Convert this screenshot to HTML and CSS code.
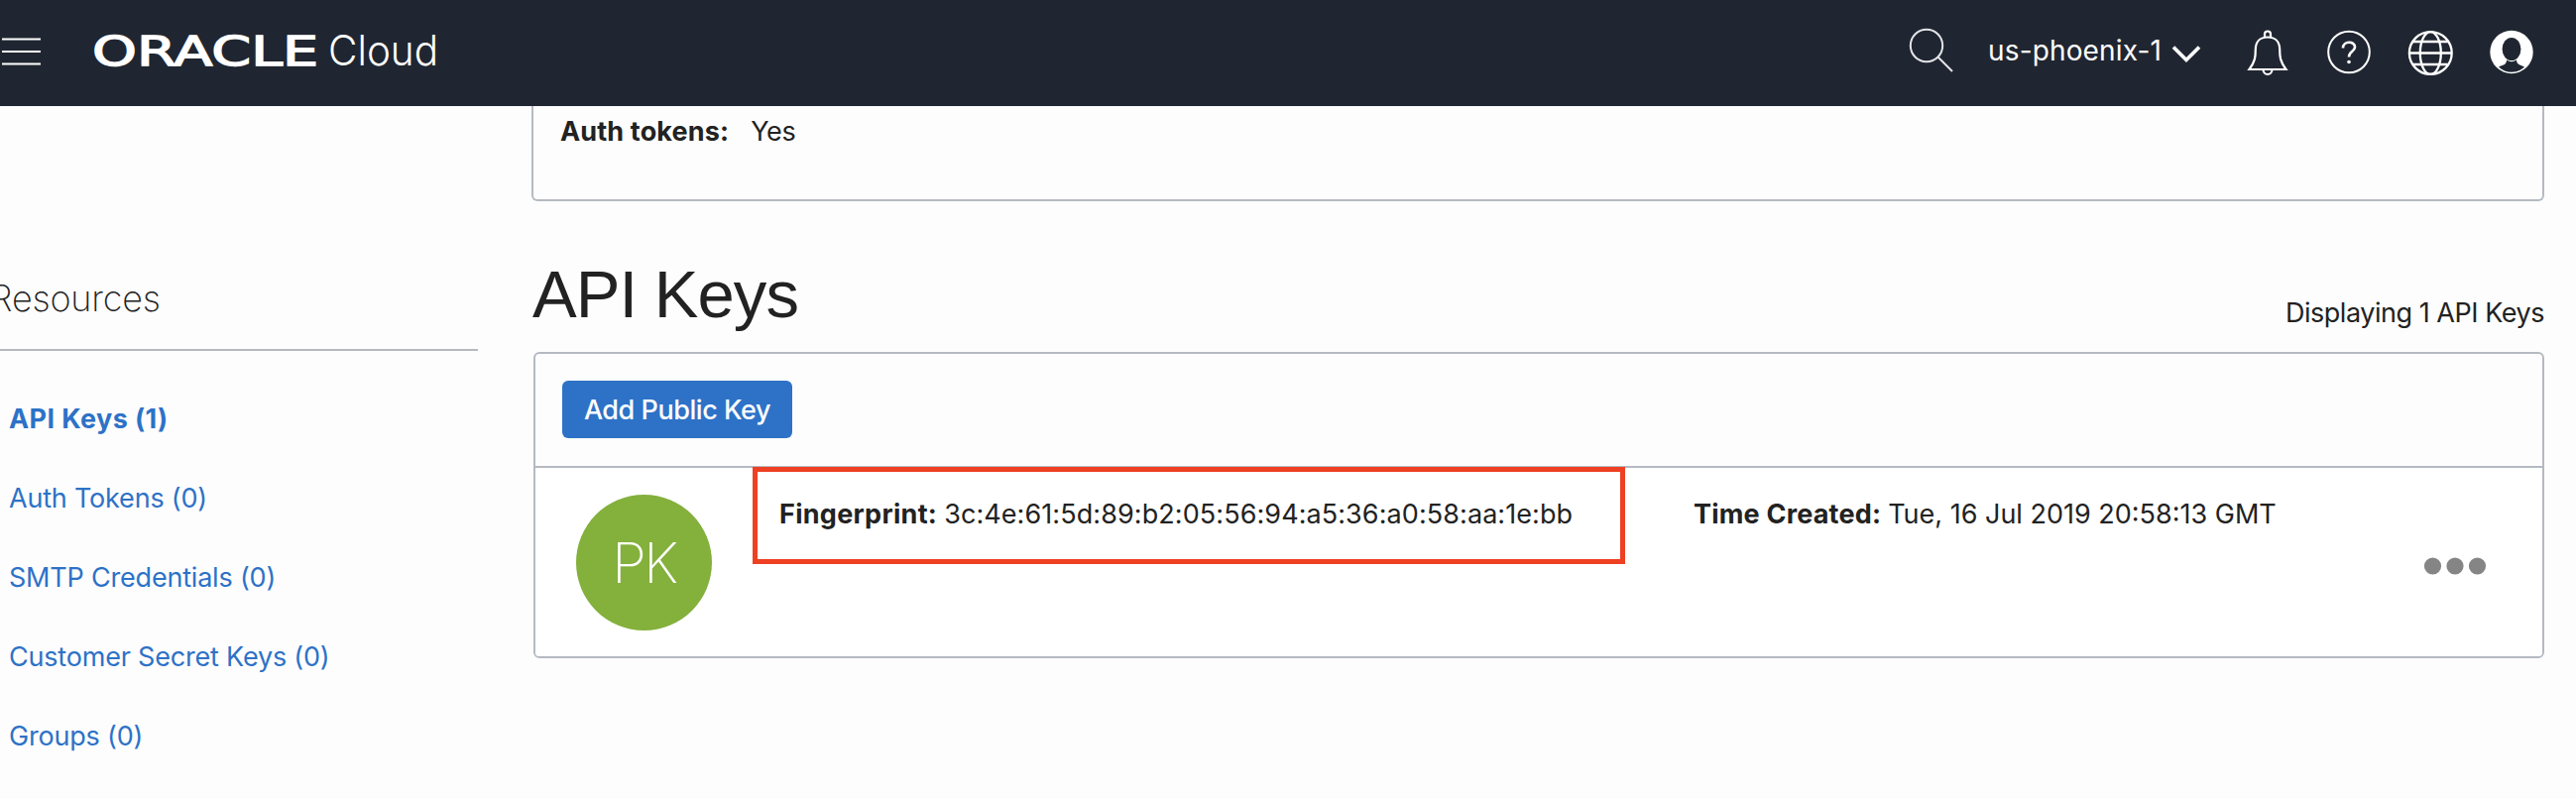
FILE: index.html
```
<!DOCTYPE html>
<html lang="en">
<head>
<meta charset="utf-8">
<title>Oracle Cloud - API Keys</title>
<link rel="stylesheet" href="styles.css">
</head>
<body>
<header class="topbar">
  <svg class="menu" width="42" height="32" viewBox="0 0 42 32"><path d="M2 4.500H41M2 17H41M2 29.500H41" stroke="#fff" stroke-width="2"/></svg>
  <svg class="logo" width="370" height="60" viewBox="0 0 370 60" fill="#fff">
    <text class="logo-oracle" x="0" y="37" textLength="228" lengthAdjust="spacingAndGlyphs">ORACLE</text>
    <text class="logo-cloud" x="238" y="37" textLength="111" lengthAdjust="spacingAndGlyphs">Cloud</text>
  </svg>
  <div class="tools">
    <svg class="search" width="46" height="46" viewBox="0 0 46 46" fill="none" stroke="#e4e5e7" stroke-width="2"><circle cx="18" cy="18" r="16.200"/><path d="M29.500 29.500L44 44"/></svg>
    <div class="region"><span>us-phoenix-1</span>
      <svg width="30" height="20" viewBox="0 0 30 20" fill="none" stroke="#fff" stroke-width="3.600"><path d="M2 2.500L15 15.500L28 2.500"/></svg>
    </div>
    <svg class="bell" width="42" height="48" viewBox="0 0 42 48" fill="none" stroke="#fff" stroke-width="2.200"><path d="M18 8V5.500A3 3 0 0 1 24 5.500V8M2.500 41C8.500 33 8.800 28 8.800 21C8.800 13 13.500 8.500 21 8.500S33.200 13 33.200 21C33.200 28 33.500 33 39.500 41Z"/><path d="M16.500 41A4.500 5 0 0 0 25.500 41"/></svg>
    <svg class="help" width="46" height="46" viewBox="0 0 46 46" fill="none" stroke="#fff" stroke-width="2"><circle cx="23" cy="23.500" r="20.800"/><path d="M17 19.500C17 12 29 12 29 18.500C29 23 23 22.500 23 28.500" stroke-width="2.600"/><circle cx="23" cy="33.500" r="1.800" fill="#fff" stroke="none"/></svg>
    <svg class="globe" width="46" height="46" viewBox="0 0 46 46" fill="none" stroke="#fff" stroke-width="2.300"><circle cx="23.300" cy="23.500" r="21.400"/><ellipse cx="23.300" cy="23.500" rx="10.500" ry="21.400"/><path d="M2 23.500H44.600M6 12H40.600M6 35H40.600"/></svg>
    <svg class="user" width="46" height="46" viewBox="0 0 46 46"><circle cx="23" cy="23.500" r="21.700" fill="#fff"/><ellipse cx="23" cy="20.500" rx="9.400" ry="11.500" fill="#202631"/><path d="M10 38.500C14 36.500 18 36.500 18 31.500Q23 35 28 31.500C28 36.500 32 36.500 36 38.500C29 45.500 17 45.500 10 38.500Z" fill="#202631"/></svg>
  </div>
</header>
<div class="page">
  <aside class="side">
    <h2 class="side-title">Resources</h2>
    <nav class="links">
      <a class="link link-on">API Keys (1)</a>
      <a class="link">Auth Tokens (0)</a>
      <a class="link">SMTP Credentials (0)</a>
      <a class="link">Customer Secret Keys (0)</a>
      <a class="link">Groups (0)</a>
    </nav>
  </aside>
  <main class="main">
    <section class="info"><b class="info-key">Auth tokens:</b><span class="info-val">Yes</span></section>
    <div class="heading"><h1 class="title">API Keys</h1><span class="count">Displaying 1 API Keys</span></div>
    <section class="card">
      <div class="actions"><button class="add">Add Public Key</button></div>
      <div class="row">
        <div class="avatar"><span>PK</span></div>
        <div class="finger"><b class="finger-key">Fingerprint:</b><span class="finger-val">3c:4e:61:5d:89:b2:05:56:94:a5:36:a0:58:aa:1e:bb</span></div>
        <div class="time"><b class="time-key">Time Created:</b><span class="time-val">Tue, 16 Jul 2019 20:58:13 GMT</span></div>
        <svg class="dots" width="64" height="20" viewBox="0 0 64 20" fill="#858585"><circle cx="9.500" cy="10" r="8.600"/><circle cx="32" cy="10" r="8.600"/><circle cx="54.500" cy="10" r="8.600"/></svg>
      </div>
    </section>
  </main>
</div>
</body>
</html>
```
FILE: styles.css
```
* { box-sizing: border-box; }
body { margin: 0; width: 2598px; height: 806px; overflow: hidden; background: #fdfdfd; color: #222; font: 27px/36px Inter, "Liberation Sans", sans-serif; white-space: nowrap; }
.topbar { height: 107px; background: #202631; color: #fff; display: flex; align-items: flex-start; }
svg { display: block; flex: none; }
.menu { margin-top: 35px; }
.logo { margin: 29px 0 0 51px; overflow: visible; }
.logo-oracle { font: 40px "DejaVu Sans", sans-serif; stroke: #fff; stroke-width: 1.4px; }
.logo-cloud { font: 300 42px Inter, sans-serif; }
.tools { margin-left: auto; display: flex; align-items: flex-start; padding-right: 42px; }
.search { margin: 28px 34px 0 0; }
.region { display: flex; margin-top: 33px; width: 215px; justify-content: space-between; font-size: 28px; letter-spacing: .15px; }
.region svg { margin-top: 12px; }
.bell { margin: 29px 0 0 46px; }
.help { margin: 29px 0 0 38px; }
.globe { margin: 30px 0 0 36px; }
.user { margin: 29px 0 0 36px; }
.page { display: flex; }
.side { width: 482px; flex: none; padding-top: 171px; }
.side-title { margin: 0; height: 76px; padding-bottom: 29px; border-bottom: 2px solid #b5bac1; font: 200 36px/46px Inter, sans-serif; text-indent: -10px; letter-spacing: -.2px; }
.links { display: flex; flex-direction: column; gap: 44px; padding: 51px 0 0 9px; }
.link { color: #2d72c7; letter-spacing: -.2px; }
.link-on { font-weight: 700; letter-spacing: .4px; }
.main { margin-left: 54px; width: 2030px; flex: none; }
.info { height: 96px; border: 2px solid #b5bac1; border-top: 0; border-radius: 0 0 6px 6px; padding: 8px 27px; display: flex; }
.info-key { letter-spacing: .15px; }
.info-val { margin-left: 22px; letter-spacing: -.4px; }
.heading { height: 152px; display: flex; justify-content: space-between; }
.title { margin: 56px 0 0 1px; font: 400 67px/76px "Liberation Sans", Arial, sans-serif; letter-spacing: -.95px; }
.count { margin-top: 95px; letter-spacing: -.47px; }
.card { margin-left: 2px; height: 309px; border: 2px solid #b5bac1; border-radius: 6px; overflow: hidden; }
.actions { height: 115px; padding: 27px; border-bottom: 2px solid #b5bac1; }
.add { display: block; width: 232px; height: 58px; padding: 0; border: 0; border-radius: 6px; background: #2d72c7; color: #fff; font: 500 27px/60px Inter, sans-serif; letter-spacing: -.45px; }
.row { height: 190px; background: #fff; display: flex; align-items: flex-start; }
.avatar { width: 137px; height: 137px; border-radius: 50%; background: #84b03c; color: #fff; margin: 27px 0 0 41px; display: grid; place-items: center; font: 200 56px/60px Inter, sans-serif; letter-spacing: -2.5px; }
.finger { width: 880px; height: 98px; border: 5px solid #ee4023; margin: -1px 0 0 41px; padding: 25px 0 0 22px; }
.finger-key { letter-spacing: .3px; }
.finger-val { margin-left: 7px; letter-spacing: .08px; }
.time { margin: 29px 0 0 69px; }
.time-key { letter-spacing: .2px; }
.time-val { margin-left: 7px; }
.dots { margin: 89px 56px 0 auto; }
```
